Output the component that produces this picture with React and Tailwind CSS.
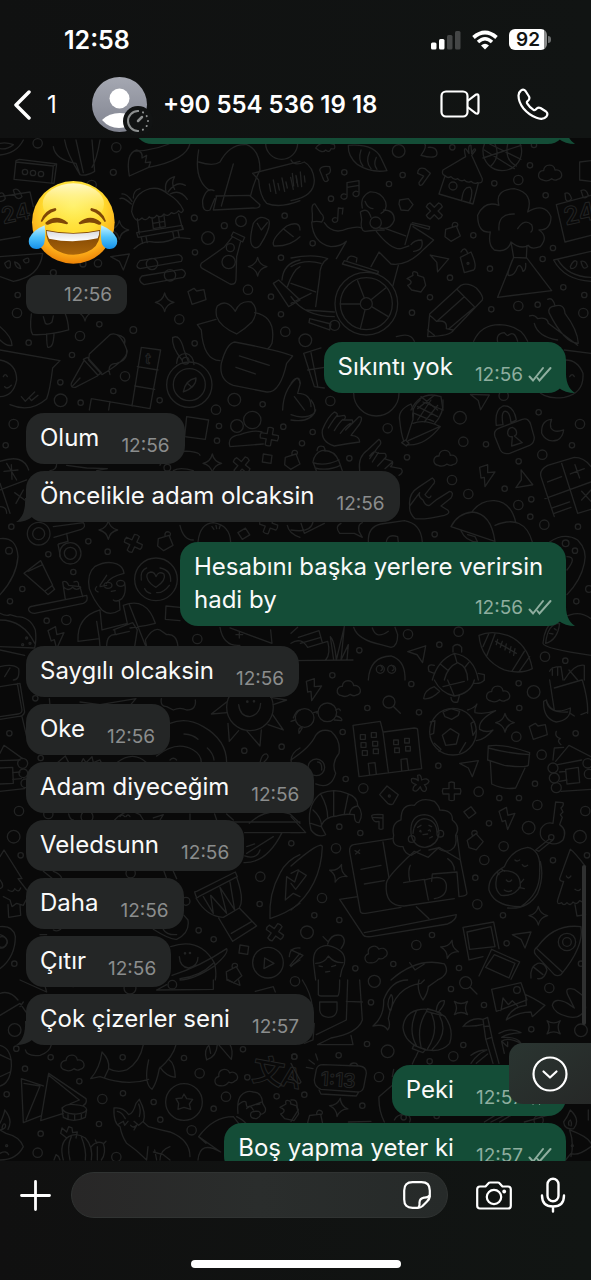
import { useState } from 'react';

const messages = [
  { id: 1, side: 'out', text: 'Sıkıntı yok', time: '12:56', tail: true, first: true },
  { id: 2, side: 'in', text: 'Olum', time: '12:56', first: true },
  { id: 3, side: 'in', text: 'Öncelikle adam olcaksin', time: '12:56', tail: true },
  { id: 4, side: 'out', text: 'Hesabını başka yerlere verirsin hadi by', time: '12:56', tail: true, first: true },
  { id: 5, side: 'in', text: 'Saygılı olcaksin', time: '12:56', first: true },
  { id: 6, side: 'in', text: 'Oke', time: '12:56' },
  { id: 7, side: 'in', text: 'Adam diyeceğim', time: '12:56' },
  { id: 8, side: 'in', text: 'Veledsunn', time: '12:56' },
  { id: 9, side: 'in', text: 'Daha', time: '12:56' },
  { id: 10, side: 'in', text: 'Çıtır', time: '12:56' },
  { id: 11, side: 'in', text: 'Çok çizerler seni', time: '12:57', tail: true },
  { id: 12, side: 'out', text: 'Peki', time: '12:57', first: true },
  { id: 13, side: 'out', text: 'Boş yapma yeter ki', time: '12:57' },
];

// small doodles, drawn around 0,0
const shapes = {
  spark: 'M0-28Q5-5 28 0Q5 5 0 28Q-5 5-28 0Q-5-5 0-28Z',
  plus: 'M-8-26Q0-30 8-26V-8H26Q30 0 26 8H8V26Q0 30-8 26V8H-26Q-30 0-26-8H-8Z',
  cloud: 'M-22 20C-42 18-38-10-20-8C-18-30 12-30 14-10C36-14 42 16 22 18C12 24 8 18 4 16C-6 24-14 24-22 20Z',
  plane: 'M-28-12L28-20L10 28L-2 2Z',
  bolt: 'M-22-24L2-32L2-8L24-10L-6 34L-8 6L-18 8Z',
  square: 'M-12-14L14-10L11 14L-15 10Z',
  bag: 'M-20-8L12-18L24 12L-4 28L-22 14ZM0-14Q-2-32 12-28Q20-24 14-16',
  note: 'M-14 20V-22L22-28V12M-14-8L22-14M-14 20a9 8 0 1 1-4-7M22 12a9 8 0 1 1-4-7',
  puzzle: 'M-28-10L-10-20Q-14-34-2-30Q6-28 4-20L22-14L28 10L14 30L-14 24L-26 10Q-14 6-16-2Q-20-8-28-10Z',
  lens: 'M-8-8m-18 0a18 18 0 1 0 36 0a18 18 0 1 0-36 0M6 6L26 26',
  block: 'M-26-14L-8-24L0-16L22-20L28 10L-14 24Z',
};

// each tile covers 300px of the wallpaper in a 3x grid
const tiles = [
  {
    at: 'translate(0 -8)',
    dots: [[113, 40, 14], [349, 52, 14], [340, 127, 9], [275, 165, 14], [583, 264, 9], [673, 287, 9], [723, 274, 16], [624, 324, 19], [585, 367, 8], [843, 383, 8], [854, 257, 8], [744, 479, 14], [813, 500, 8], [843, 553, 8], [856, 605, 14], [538, 568, 14], [584, 640, 8], [53, 495, 8], [51, 549, 14], [298, 583, 8], [240, 618, 14], [86, 638, 8], [216, 675, 8], [375, 739, 14], [181, 757, 8], [340, 783, 8], [182, 811, 19], [242, 818, 8], [479, 811, 8], [703, 809, 19], [788, 823, 8], [160, 428, 9], [294, 400, 11], [249, 402, 9], [400, 600, 10], [75, 126, 8], [99, 129, 8], [123, 132, 8], [456, 402, 17], [510, 436, 17], [691, 353, 12], [686, 396, 20], [557, 692, 10], [845, 40, 48]],
    items: [['plane', 360, 392], ['spark', 773, 410], ['spark', 494, 517], ['block', 590, 499], ['spark', 255, 545], ['spark', 358, 300]],
    paths: [
      'M48 92L58 88L170 102L162 160L42 148ZM48 96L160 108L170 102M160 108L155 160',
      'M160 50Q166 90 228 100L240 134Q256 140 284 124L276 30M194 30Q200 70 240 134M228 30L250 128M300 30Q290 90 276 112',
      'M0 75Q50 70 70 30M0 40Q20 36 40 44Q20 60 0 56',
      'M388 138Q376 70 410 60Q430 66 426 84L440 76L436 98L452 96L446 112Q560 90 570 40M388 138L446 112M400 64Q480 60 530 30',
      'M395 245Q400 190 450 176Q480 170 504 192Q536 210 550 240Q546 254 536 242Q526 256 514 248Q504 262 492 252Q482 266 470 256Q460 270 448 260Q438 276 426 264Q406 284 395 245Z',
      'M412 266L418 312M536 252L548 298M410 308L546 286L550 298L414 322ZM424 322L428 340M438 320L442 338M518 304L522 324M534 302L538 322M402 356Q430 330 460 336Q500 340 530 322L570 326',
      'M456 262L460 296L496 290L492 256M476 260L480 292M458 280L494 274',
      'M394 222Q370 200 360 206M396 214Q380 190 366 192M400 204Q400 180 420 176M498 184Q490 150 524 140Q512 160 524 178M504 186Q530 150 556 166M510 192Q540 176 562 208',
      'M420 392L536 374Q552 380 544 394L420 416Q402 410 420 392ZM426 438L546 418Q564 428 550 442L432 464Q410 452 426 438Z',
      'M596 60Q580 150 630 182M596 96Q640 110 660 96Q690 40 740 44Q780 60 780 120Q760 160 752 196M700 102L664 228M642 182Q620 170 608 210Q606 250 630 240L644 206M648 198L748 196L780 224Q780 236 760 234L640 240L650 198M600 30Q640 50 664 30',
      'M758 130L900 94M758 130L776 150Q780 200 800 220Q840 236 900 212M808 162L812 184M820 150L828 190M834 160L838 180M846 144L854 184M858 156L862 174M872 142L880 178M888 136L894 170',
      'M694 318L700 306L734 322L728 336ZM698 320L672 352L604 400Q598 410 608 416L690 462Q706 466 708 450L710 380L722 334',
      'M760 350Q744 340 760 280Q780 250 806 270Q816 290 780 346Q770 358 760 350ZM772 280L784 300L802 278',
      'M822 348Q810 330 860 288Q900 270 900 300M822 348Q870 350 900 320M850 296L880 320',
      'M652 528Q680 504 706 544Q720 510 754 516Q780 540 756 576Q736 596 710 612Q660 590 650 560Q646 540 652 528Z',
      'M764 548Q830 560 816 640Q812 650 804 656M648 568L592 584L604 600Q610 690 660 692',
      'M704 636Q680 640 664 700Q656 750 700 766L800 786Q840 790 860 700L878 678Q840 662 704 636ZM718 678L808 706M708 712L766 732',
      'M268 672L330 614Q360 600 382 664Q380 690 306 734L266 690ZM250 688L262 682L304 728L294 736ZM252 692L214 760Q210 774 226 772L292 738M216 770L240 744M350 614Q380 620 374 640M330 734Q320 700 350 700Q384 690 380 660',
      'M424 652L482 660L450 836M424 652L396 828M412 710L474 720M404 768L464 778M274 806L450 836M274 806L268 840M330 814L326 840',
      'M520 622Q540 612 552 660L564 692M518 622Q514 650 546 690M530 700Q530 672 558 670Q580 676 582 704M550 786Q556 750 588 744Q590 770 550 786ZM562 760L576 772',
      'M94 552Q88 600 98 614Q150 616 206 600Q204 570 196 552M140 612Q140 650 144 652Q160 656 162 612M130 560L136 580Q146 586 156 576L160 558',
      'M0 590Q36 620 36 646Q20 650 0 630M0 660L180 692L158 714Q150 780 140 806Q90 850 30 824M64 800L76 814L104 786M88 804L94 812L114 796M0 690Q50 700 50 750Q40 800 0 800M10 740Q16 728 22 740M14 770Q20 780 34 766',
      'M0 330L60 320M0 380L128 370Q120 440 40 454L0 440M14 400Q36 380 30 412Q20 420 14 400ZM44 396Q60 400 62 416Q46 414 44 396ZM70 390Q90 376 86 396Q74 404 70 390',
      'M0 200L90 186L100 230M40 180Q56 170 66 200Q56 212 46 200ZM0 190Q12 184 16 206Q10 216 0 214',
      'M820 460L836 450L900 510M820 460L866 530L900 510M846 450Q850 400 900 390M862 470Q880 420 900 410M848 840Q850 780 888 746Q900 740 900 760',
    ],
    rings: [[568, 764, 68], [568, 764, 48]],
    texts: [[10, 282, 68, '24', -12], [434, 700, 44, 't', 8]],
  },
  {
    at: 'translate(291 -8)',
    dots: [[323, 63, 19], [484, 52, 8], [160, 127, 8], [294, 162, 8], [335, 135, 8], [120, 206, 8], [65, 340, 8], [610, 160, 8], [682, 150, 14], [717, 106, 8], [764, 196, 8], [547, 316, 8], [597, 416, 8], [477, 443, 8], [417, 502, 8], [363, 548, 8], [601, 538, 8], [682, 528, 14], [740, 524, 8], [786, 354, 8], [755, 387, 8], [817, 472, 8], [880, 495, 8], [877, 549, 14], [43, 631, 19], [118, 813, 14], [638, 797, 14], [729, 45, 8], [486, 168, 12], [226, 521, 18], [254, 278, 17], [131, 586, 15], [531, 400, 3]],
    items: [['note', 182, 180], ['cloud', 778, 130], ['plus', 430, 243, 45], ['bag', 484, 306], ['plane', 440, 396, 20], ['puzzle', 376, 456], ['plane', 564, 810, 10]],
    paths: [
      'M172 46Q250 40 270 84L288 122Q240 130 200 104Q170 80 172 46ZM210 60Q200 90 216 108M236 66Q222 96 240 116M256 82Q246 104 258 118',
      'M0 212Q70 200 70 150Q66 110 40 96Q10 110 0 90M4 130L8 168M16 140L18 158M28 126L32 170M40 138L42 156',
      'M86 120Q90 106 116 110Q124 130 106 134L112 150Q104 160 98 150ZM380 130Q380 110 402 116L418 130L394 164Q384 170 384 158L398 138Z',
      'M74 54Q90 30 130 44Q136 60 120 56Q116 70 104 60Q94 72 74 54ZM390 76Q410 50 400 40M390 76Q440 90 438 68Q436 50 412 52',
      'M524 80L456 120Q450 134 464 138Q470 146 480 140Q490 152 500 146Q510 156 520 150Q530 160 540 154Q550 164 560 158Q576 162 574 146L542 76M524 80Q516 50 526 58L534 70Q530 44 540 46L542 70Q550 50 554 60L542 76M462 138L444 192L546 222L562 160M512 212Q516 168 538 172Q548 184 536 218',
      'M596 42L690 88M580 60L670 116M598 110Q630 80 612 42M650 42Q640 90 676 108M690 46L576 84',
      'M326 210L352 206L366 224L352 242L330 240L324 222Z',
      'M142 234L156 236M142 234L140 270a8 7 0 1 1-4-6M156 234L154 252',
      'M64 250Q60 220 72 222L90 250Q104 262 92 276Q76 272 64 276ZM62 276Q66 340 120 350Q150 350 166 334L136 386M100 278Q124 316 170 296Q200 288 212 294',
      'M212 268Q206 300 222 304Q256 300 280 300M212 268L208 246Q230 230 240 262M214 234Q206 200 236 186Q270 184 284 216Q290 240 270 250M222 214Q230 236 246 236M278 240Q310 240 310 270Q300 300 266 294',
      'M256 304Q300 360 330 356L354 348M284 296L344 318M240 410L264 366L300 402Q350 410 400 356L428 330L398 310L366 290M342 344L360 282L414 298L416 290L364 278M360 344Q370 330 392 330Q400 360 368 364M322 406L306 466',
      'M0 384Q70 370 110 386Q86 400 86 440L74 530M0 410Q40 386 90 400M0 460L74 486M0 520L60 490M44 540L130 546M0 500Q40 560 130 560M160 392L262 424L260 432L154 402ZM168 390Q176 370 198 384L196 396',
      'M56 566L120 582L116 600L54 578ZM200 452L220 504M284 474L242 508M148 522L208 522M208 596L222 540M292 560L242 530',
      'M510 366Q522 346 530 370M508 382L540 366Q560 410 548 420L520 428Z',
      'M410 620L416 552L510 466Q530 456 556 474Q580 500 574 510L488 600Q480 618 410 620ZM416 556Q440 576 436 574Q470 568 466 596L486 600M500 480L550 530M520 500L438 574M548 534L474 596M410 600L430 616',
      'M624 226Q610 180 670 176Q730 190 710 246Q760 216 780 260Q780 300 744 300Q774 320 748 350Q720 360 712 346Q690 360 660 336Q650 370 610 360Q590 344 598 306Q560 310 560 256Q580 210 624 226ZM624 300Q620 250 670 252M680 296Q700 264 722 284Q728 300 720 306M660 336L668 382L706 384L708 346M668 382L620 502L782 482L706 382M664 390Q648 430 652 436Q670 440 680 410Q690 400 696 424Q706 420 704 400',
      'M796 224L900 196M796 224L822 336L900 316M822 190Q836 184 842 206Q830 220 824 208ZM870 182Q886 174 892 196Q884 208 876 200ZM866 96L900 92M866 96V150L900 154',
      'M788 390L900 364M788 390Q820 450 900 454M800 388Q830 440 900 442M838 410Q850 384 858 396Q858 416 840 416ZM870 394Q884 390 890 410Q876 424 870 394Z',
      'M716 558Q730 552 740 566Q770 560 772 580L860 646M730 580Q740 620 800 630M770 508Q786 500 792 528Q820 520 822 550Q860 600 862 640Q820 640 774 548Q770 530 792 528',
      'M548 634Q570 584 626 584Q690 586 710 634M620 636Q614 610 640 608Q650 620 652 616Q670 600 680 634M316 620Q360 606 370 634M38 670L90 654M38 670L54 720L70 770L100 774M60 668L80 768M50 720L100 712',
      'M0 760Q20 730 28 760L20 790Q60 790 60 830M10 800L40 840M360 840Q390 780 450 800L456 840M390 800L440 840M430 796L380 836',
      'M820 660L900 670M740 780Q760 810 820 802Q880 790 876 730Q860 690 824 690M836 740Q844 728 850 740',
    ],
    rings: [[226, 521, 94], [226, 521, 78], [634, 64, 58], [256, 790, 68]],
    texts: [[824, 286, 74, '24', -12]],
  },
  {
    at: 'translate(0 262)',
    dots: [[41, 72, 14], [17, 136, 8], [648, 29, 14], [657, 78, 8], [651, 122, 8], [850, 80, 8], [34, 380, 8], [265, 424, 8], [323, 455, 8], [145, 463, 8], [220, 516, 8], [67, 567, 8], [30, 604, 8], [140, 662, 8], [199, 660, 14], [592, 717, 14], [502, 203, 10], [711, 78, 19], [757, 60, 26], [116, 401, 18], [211, 460, 18], [68, 734, 3], [80, 714, 3], [90, 730, 3], [27, 452, 10]],
    items: [['plus', 808, 110, 10], ['spark', 637, 190], ['plus', 725, 196, 40], ['square', 802, 176], ['bag', 876, 180], ['spark', 325, 390], ['plus', 400, 430, 25], ['bag', 495, 424], ['square', 732, 401, -40], ['plus', 806, 374, 20], ['bolt', 170, 712, -10]],
    paths: [
      'M560 50L626 60L616 118L554 110ZM690 140Q680 110 720 104Q760 88 786 96M690 140L790 132',
      'M0 184Q70 160 86 210M0 270L80 240M30 340L0 250M20 190L50 240M12 214L54 210M34 194L36 238M44 278L74 300M70 270L48 310M0 320Q20 320 20 340',
      'M170 192Q170 210 150 212M200 196L260 204L322 206L290 212M480 196Q500 150 570 154Q600 158 600 166M520 212Q540 200 580 212',
      'M160 380L250 368Q260 380 244 388L162 412M174 434Q180 460 180 470M200 400L204 424M176 432L204 424',
      'M72 520L122 482L158 556L134 574ZM84 514L128 494M134 574L144 584L164 568L156 556',
      'M86 630Q84 620 100 618L260 586Q266 604 250 610L104 640Q90 640 86 630ZM196 598L188 546Q200 540 206 556L240 560L248 590M190 560Q204 576 218 562Q230 574 242 562M222 546Q236 540 236 556',
      'M0 416Q50 410 54 470Q50 530 0 584M0 640Q20 650 30 644L50 650Q90 650 106 690Q110 720 104 744L0 740M0 660Q70 660 104 730',
      'M268 566Q260 520 284 500Q320 480 350 492Q370 500 372 520Q330 530 320 550M268 566Q280 600 306 630Q330 650 360 630L358 600M290 560Q280 570 294 576M374 548Q380 580 366 596Q350 608 340 600M320 526L300 556M334 574L346 572M300 560L320 556M312 556a12 9 0 1 0 24 0a12 9 0 1 0-24 0M350 550a12 9 0 1 0 24 0a12 9 0 1 0-24 0',
      'M234 724Q230 650 300 630L306 690L382 670L370 616Q440 590 466 670L440 676M234 724L298 716L290 664M298 716L300 740M340 690L398 668L412 690L404 740M344 690L346 704L388 694M320 740Q320 700 350 704M388 614L436 736M440 676L390 684M440 740L436 720Q460 680 480 690L500 704Q530 700 534 740',
      'M498 618L540 622M498 618L496 658L540 662M424 540Q420 512 440 504M480 504Q514 510 512 544M508 556Q490 580 470 578M434 566Q440 578 452 580M444 540Q434 520 452 516Q464 516 468 530Q476 512 492 522Q500 540 468 562Q450 552 444 540Z',
      'M540 376Q550 420 580 420M594 426Q600 370 640 368Q690 376 692 426M636 380L642 388M648 376L650 386M660 378L658 386M862 376Q866 400 900 412M660 682Q670 740 720 736M690 684L816 730L812 690M708 704H728M718 696V714',
      'M0 750L74 766M0 800Q40 790 56 806Q60 840 40 840M14 830L30 804',
    ],
    rings: [[116, 401, 34], [211, 460, 32], [468, 538, 64]],
    texts: [],
  },
  {
    at: 'translate(291 262)',
    dots: [[507, 53, 19], [290, 85, 14], [65, 96, 8], [33, 130, 8], [175, 175, 8], [348, 172, 8], [517, 125, 14], [585, 133, 8], [743, 37, 8], [867, 72, 14], [843, 136, 8], [754, 164, 14], [683, 184, 8], [483, 240, 14], [532, 282, 14], [641, 266, 8], [721, 298, 8], [682, 315, 14], [718, 350, 8], [760, 374, 14], [861, 380, 8], [431, 403, 8], [894, 567, 10], [856, 604, 8], [351, 703, 14], [503, 695, 14], [445, 734, 8], [205, 751, 8], [762, 770, 14], [823, 782, 8], [124, 826, 8], [268, 808, 12], [302, 808, 12], [824, 430, 10], [852, 452, 8]],
    items: [['cloud', 464, 176, 0], ['bolt', 588, 226], ['plane', 694, 240, 60], ['plane', 380, 762, -10]],
    paths: [
      'M94 90Q110 50 130 36Q144 40 136 50L160 46Q168 54 156 60L184 60Q188 70 176 76L164 90L204 50Q218 50 206 72L180 106Q206 108 206 126Q170 130 130 138Q90 126 94 90ZM112 84Q130 54 140 46M130 92Q146 66 156 58M148 100Q166 76 178 70',
      'M206 212Q200 170 230 150L264 118Q276 128 262 140L236 176M236 168Q250 148 260 160L282 160Q290 170 280 176L304 184Q308 192 298 200L330 206Q340 216 324 226M244 186L262 158M260 198L284 172M282 206L304 186',
      'M356 318Q352 280 382 262L424 234Q438 244 424 256L402 284Q414 300 420 288M386 278Q380 290 396 300Q404 320 416 316L438 298L476 274Q490 276 480 294L450 318L470 330Q480 340 460 346Q400 360 372 356Q354 340 356 318Z',
      'M0 44Q40 60 70 40Q76 20 60 0M0 60Q60 70 74 30',
      'M326 60Q320 30 360 12Q370 30 366 58L346 120M326 60Q330 100 338 122M366 70Q400 56 448 80Q400 140 348 134M352 122L446 80M366 60Q360 20 388 0M370 40L428 64M380 20L440 50M396 6L456 30M456 0Q460 40 430 72M420 0L380 60M440 16L400 66M332 128L344 120L354 130L346 138Z',
      'M66 186Q70 160 92 152Q130 148 144 184L154 212M66 186L76 212M78 152Q80 134 98 140Q104 148 102 154M66 188Q100 200 144 180M72 204Q110 214 148 196',
      'M612 110Q606 90 626 84L694 58Q714 52 720 76L730 112Q730 130 716 136L656 160Q636 164 628 150ZM616 76Q610 30 636 18Q668 14 676 60L660 68Q656 30 640 34Q630 40 636 74ZM650 100Q650 84 664 82Q680 88 676 104L670 108L694 128L662 138L664 110Q652 112 650 100Z',
      'M782 58Q750 60 752 100Q766 130 800 120Q816 110 818 90Q790 100 780 84Q776 70 782 58Z',
      'M750 230Q744 210 770 196L850 172Q880 172 900 200M750 230L790 350M812 190L860 340M762 296L900 246M770 246L812 230M838 222L880 206M852 194L866 234M872 300L900 270M872 274L900 304M860 340L900 328M784 324L836 306M790 340L840 322',
      'M480 380Q500 340 544 336Q600 340 612 424L480 380ZM544 334Q570 300 610 302Q660 306 674 366M612 376Q700 340 724 426M510 392Q524 424 560 426L552 410L530 404',
      'M232 426Q230 380 270 372L340 362Q390 370 394 426M286 426Q290 400 320 410L322 426',
      'M150 370Q130 380 146 400L190 400L214 412L204 394Q200 372 214 368M0 390Q60 400 66 366M30 370L40 400L100 370',
      'M776 426Q820 396 860 420Q890 450 880 490Q870 540 828 584M828 470Q860 470 828 510',
      'M188 682Q200 720 270 734L300 742Q320 740 320 704L312 682M244 684Q256 720 292 694',
      'M20 682L0 700M22 712L84 692L94 728M28 730L90 712M0 782L186 780M0 730Q30 710 50 742L110 724Q120 760 104 780M128 780L118 710Q130 720 136 780L160 680L150 780L172 734L168 780',
      'M564 706Q600 690 650 706Q710 730 724 806Q690 824 640 810Q570 780 564 706ZM594 700L576 740M612 702L588 766M700 754L664 812M716 770L684 816M614 724L676 760M620 718L616 734M634 724L628 742M646 732L642 750M660 740L656 758M672 746L668 766',
      'M424 840Q440 780 490 760Q550 770 562 840M486 756V740Q500 726 512 742V756M430 796Q406 790 414 814L430 820M460 840Q470 800 500 788Q530 800 530 840M490 760L498 788M536 784L520 804M448 792L472 812M562 820L580 824V840',
      'M232 840Q236 770 300 768Q340 780 342 830V840M268 796Q280 806 270 812M302 796Q316 806 304 812',
      'M756 730Q760 680 790 660L840 644Q870 634 900 656M756 730Q760 746 900 766M764 730Q800 720 806 670Q770 670 764 730M776 700L786 702M790 686L796 690M776 814Q780 800 810 800L816 840M784 804V826M800 802V826M820 840Q850 790 880 796V840M834 810L860 840',
    ],
    rings: [],
    texts: [],
  },
  {
    at: 'translate(0 542)',
    dots: [[28, 160, 8], [122, 234, 8], [57, 393, 14], [41, 470, 19], [62, 526, 8], [733, 212, 8], [845, 200, 8], [874, 490, 8], [781, 590, 14], [779, 672, 8], [596, 751, 8], [641, 778, 8], [43, 851, 8], [558, 664, 12], [106, 55, 8], [742, 65, 2], [762, 64, 2], [555, 820, 2], [570, 819, 2], [68, 250, 15], [70, 280, 13], [76, 310, 13], [261, 410, 18], [392, 580, 14], [145, 402, 14], [6, 786, 16]],
    items: [['plus', 825, 757, 35], ['square', 732, 809], ['bag', 700, 880, -10]],
    paths: [
      'M0 20L60 10L74 96Q70 110 52 110L0 118M52 10L66 90Q66 100 54 102L0 110M66 110L80 170M148 56L150 76M240 66L300 74L408 56L390 76M484 56Q480 80 500 80L520 90Q540 80 560 90Q590 90 586 60',
      'M682 98L634 102L680 66M684 130L688 184L716 152M740 152L780 198L784 150M804 134L850 150L818 104M820 74L860 60L812 52M716 74Q720 110 750 110Q780 104 782 70',
      'M510 130Q560 110 610 140Q680 180 680 248M470 228Q530 180 580 210Q604 224 604 248M552 162Q580 164 594 178M622 204Q640 220 642 240M510 240Q520 230 530 240',
      'M0 220L12 196L68 236M0 242L60 240M0 264L38 262L40 310L0 312M0 334L74 326M38 278L60 276M38 298L64 296',
      'M172 248L196 228L206 248M244 248L250 236L258 248L276 230L280 248L300 240L304 248M350 248Q400 210 440 248M780 248Q786 220 800 222Q812 230 790 248M874 248Q870 220 900 204',
      'M206 402Q210 420 220 420M344 420Q380 380 420 404L430 420M360 410Q366 400 374 410M378 410Q384 400 390 410M460 414L490 404L480 420M570 402V420M644 402L650 420M680 402L700 420',
      'M692 426H900M734 458H900M748 430Q800 380 870 402L900 430M732 548Q800 550 846 458M740 500L764 492M740 520L820 470M780 510Q770 540 734 528',
      'M12 510L0 530M12 510L66 596L54 596L80 630M0 600Q16 620 0 626M24 630Q40 640 44 626Q56 640 62 624M10 650L30 660L36 680L50 670L70 676L78 660M24 674L26 712L62 706L60 676',
      'M584 636Q590 660 596 650L712 590L706 576L590 634ZM588 654Q620 710 670 712L718 684Q734 660 710 592M610 650L640 700L632 646L680 700L660 622L704 690L690 606M656 714L698 784L770 738L718 684M694 760L756 724',
      'M810 716Q806 640 840 580Q860 540 900 524M810 716Q860 700 900 670M856 660L860 590L884 606L896 570M856 660L880 640L900 650',
      'M0 740Q40 736 46 770Q46 830 0 866M0 764Q20 770 22 786Q14 808 0 804M460 748Q510 780 530 778Q570 760 564 720L552 706M490 748Q500 766 530 764M130 574L160 598M160 574Q180 580 186 596M492 574L500 596M520 574L530 596M120 764L140 764M160 750Q172 756 182 748',
      'M512 800Q600 770 644 850Q650 880 646 900M538 830Q540 862 566 864Q594 858 594 832M516 886Q600 860 680 806Q688 820 640 860Q580 900 540 900M540 896Q600 890 640 850',
      'M794 834L822 850L792 866ZM868 830Q870 800 900 804M870 856L900 820M900 840L872 858M880 114Q890 90 900 90',
    ],
    rings: [[750, 82, 70], [804, 848, 46]],
    texts: [],
  },
  {
    at: 'translate(291 542)',
    dots: [[361, 12, 8], [683, 10, 8], [229, 84, 8], [384, 97, 8], [728, 36, 19], [685, 84, 8], [155, 156, 8], [676, 170, 14], [854, 160, 8], [752, 224, 14], [164, 297, 8], [217, 325, 14], [442, 257, 8], [732, 311, 8], [563, 335, 14], [625, 354, 8], [684, 354, 8], [739, 375, 14], [883, 393, 14], [594, 430, 8], [145, 440, 8], [208, 459, 8], [713, 443, 19], [867, 470, 19], [135, 505, 14], [638, 499, 14], [580, 540, 14], [786, 541, 8], [553, 593, 8], [93, 654, 14], [559, 673, 14], [70, 706, 8], [145, 720, 8], [636, 706, 8], [48, 757, 19], [423, 765, 8], [376, 795, 14], [647, 790, 8], [307, 852, 8], [193, 865, 8], [504, 864, 8], [870, 851, 8], [888, 526, 8], [76, 262, 25], [109, 97, 28], [41, 114, 28], [781, 472, 8], [786, 264, 15], [790, 294, 15], [796, 323, 15], [890, 250, 14], [894, 282, 14], [828, 786, 13], [295, 348, 3], [362, 477, 10], [448, 461, 10]],
    items: [['bolt', 68, 28], ['cloud', 174, 27], ['cloud', 622, 43], ['lens', 302, 74], ['spark', 642, 128], ['block', 741, 154], ['plane', 534, 262], ['plus', 482, 334, 0], ['square', 537, 397, -45], ['bolt', 650, 414, -10], ['bag', 550, 482, -20], ['spark', 142, 580, 20], ['spark', 742, 707], ['plane', 692, 776], ['spark', 476, 808, 15], ['cloud', 254, 822, -20]],
    paths: [
      'M186 136L268 124L276 156L292 276M186 136L204 290L392 266L380 150Q380 144 370 144L278 156M208 164h15v14h-15ZM241 158h15v14h-15ZM210 188h15v14h-15ZM245 184h15v14h-15ZM214 212h15v14h-15ZM247 207h15v14h-15ZM308 180h14v14h-14ZM341 175h14v14h-14ZM311 204h14v14h-14ZM344 199h14v14h-14ZM236 286L232 250L252 248L256 282M332 272L330 238L348 236L352 268',
      'M456 96L480 86L506 94L502 106L482 118L462 110ZM478 146L504 162L496 192L464 196L454 166ZM418 126L432 122L428 160L418 164M550 124L540 130L546 166L556 150M430 190L450 208L444 214M524 188L506 218M530 90Q550 84 558 72Q550 86 552 98Q580 104 614 92Q560 120 566 148Q586 160 606 150Q580 180 556 182',
      'M592 198Q640 190 716 218L712 256Q700 264 640 256L590 240ZM592 204Q650 220 716 224M598 244L602 312Q640 330 674 324L702 264',
      'M78 100L80 94L68 98M134 90Q146 82 148 92M136 108Q156 114 152 122L130 120M24 160Q20 140 34 144L24 160M12 120L0 124',
      'M0 240Q60 200 74 166Q90 144 120 154Q150 180 144 220Q120 250 134 280Q120 330 74 312M80 246Q94 246 92 270',
      'M56 430Q50 370 90 340Q130 324 168 340Q200 350 200 376Q220 400 204 428Q190 430 190 404Q160 400 138 408Q100 410 90 438L104 464Q80 476 60 450ZM66 390Q90 410 92 438M90 344Q110 380 110 412M128 332V408M172 342L160 400M200 378Q180 380 176 400M60 430L90 440',
      'M380 286Q390 280 392 300Q410 292 414 304Q410 314 400 314Q412 328 402 334Q392 336 388 320Q376 340 366 330Q366 318 376 314Q356 308 362 296Q374 294 382 302Z',
      'M266 344L288 318L322 344L306 372Q300 376 290 370ZM242 408Q242 402 276 404V446Q270 450 264 446V424Q246 430 242 408ZM244 412L274 414',
      'M336 500Q300 500 308 466Q300 430 330 420Q330 370 370 376Q390 350 430 364Q446 380 446 390Q486 390 484 420Q510 440 494 466Q500 500 480 510Q460 520 440 504L414 510M336 500Q340 520 360 526L388 510',
      'M360 460Q356 406 400 404Q440 406 444 460Q440 496 402 502Q366 500 360 460M366 460Q370 420 400 416Q436 420 438 456M380 442L390 436M414 436L422 440M386 454Q390 448 390 456M412 452Q418 446 418 454M396 464L410 462M416 474L424 470',
      'M286 610Q288 590 370 514L412 532L444 502L508 540L528 640Q528 648 504 650L498 576L424 582L422 604M286 610Q280 680 340 678L490 656M338 608L400 598L412 660M356 602Q350 570 358 556M470 536Q490 550 490 570M402 600Q460 580 466 614Q470 650 430 656M498 466L508 540',
      'M304 476L188 494Q174 496 176 516L208 694Q210 702 224 700L330 682M276 486L294 594M192 512L206 520M206 510L194 522M210 568L270 556M220 612L280 602M200 650L146 658L216 764Q220 772 240 770L470 732Q496 720 496 704L220 758M376 680L414 716',
      'M594 630Q590 590 640 560Q660 510 710 502Q750 510 746 570Q750 640 690 680Q610 680 594 630ZM748 544Q760 590 740 640Q710 690 650 684M616 600Q616 580 636 572Q690 570 688 620Q670 650 630 646Q610 630 616 600M624 584L618 576M640 574L632 568M688 610L698 598M684 622L700 626M672 540Q678 546 686 540M694 554Q700 564 710 556M646 600Q654 610 662 600M640 630Q650 638 662 632',
      'M778 490Q740 480 750 446Q764 424 786 430L794 366L816 368Q820 376 810 384L816 396L808 404L814 412L806 434Q830 450 816 480Q800 496 778 490M774 478L734 510L744 514L786 480',
      'M794 244L834 196L900 230M786 240L790 204L818 202M796 154Q790 170 808 176Q796 182 810 194M800 254L872 240M806 276L824 274M824 268L862 262L866 308L828 312ZM806 304L828 300M810 334L900 328M766 60Q780 110 838 84Q840 120 796 126Q756 116 758 64ZM766 60Q770 100 830 96M776 0L790 90M790 24L872 0M890 100Q892 60 874 0M870 104L890 96M850 108L838 100',
      'M430 0Q450 40 490 48Q540 40 550 0M398 56Q400 30 430 20L446 34Q420 60 398 56ZM480 52Q480 70 500 66L506 44M470 0L490 48M456 20L520 4M550 10Q570 12 580 0',
      'M838 508L806 596Q806 604 818 604L800 660Q796 676 812 668Q818 680 828 668Q838 680 846 666Q858 676 866 662L882 670M838 508Q850 516 884 560M826 588Q832 600 840 588M852 628Q862 636 868 628M852 674L858 708L884 704',
      'M516 742L608 726L624 806M516 742L534 840L576 830M528 756L600 740L612 800L536 808ZM602 808L686 846L660 898M602 808L564 888M610 824L672 850L654 894L584 862Z',
      'M734 824Q724 810 740 800Q790 730 870 740Q880 800 810 884Q800 890 790 884L734 824ZM738 806L814 876M720 894Q716 860 740 850Q760 846 768 870Q760 900 740 896M726 860L756 884',
      'M68 852Q62 800 110 796Q170 810 160 852Q150 870 148 890M68 852Q70 870 74 900M74 850Q100 850 112 828Q130 850 156 848M110 792Q120 760 150 766Q170 780 150 806M96 770L112 786M84 858L94 860M122 860L134 856M104 876L116 874',
      'M300 900Q380 830 460 852Q480 880 440 900M356 848L372 870L400 852M0 580L20 570L46 586L14 628L0 610M0 558Q90 480 94 500Q90 620 0 690M0 810L36 826L0 860M0 410L44 458H0',
    ],
    rings: [[486, 155, 70], [828, 786, 26]],
    texts: [],
  },
  {
    at: 'translate(0 842)',
    dots: [[44, 150, 19], [49, 206, 8], [152, 232, 8], [75, 266, 8], [368, 232, 8], [552, 234, 8], [729, 208, 8], [883, 230, 8], [599, 280, 14], [742, 292, 8], [238, 304, 8], [307, 357, 14], [369, 340, 8], [20, 343, 8], [461, 366, 8], [678, 350, 14], [641, 386, 8], [830, 349, 8], [297, 432, 8], [122, 461, 8], [481, 419, 8], [575, 451, 14], [113, 518, 14], [349, 531, 14], [517, 14, 13], [390, 24, 18], [20, 497, 3]],
    items: [['cloud', 218, 250, 0], ['cloud', 678, 292, -15], ['puzzle', 868, 392]],
    paths: [
      'M60 0L140 36L130 0M0 106L60 70L78 96M0 40Q30 30 54 60M70 66L60 80M150 10L220 20V0M470 30L500 14M470 30L640 28L640 0M680 0L720 16L716 0M766 34L820 20L826 36',
      'M76 210Q80 230 120 226Q150 216 154 194M0 196Q36 206 34 260Q30 310 0 318M0 224L34 240M0 290L30 276',
      'M272 296Q300 264 306 216Q330 240 326 266Q350 280 380 270Q420 246 430 194M272 296L300 290Q380 320 446 298M446 240Q430 310 456 328Q470 310 478 266Q520 230 528 194M480 262Q500 290 526 292Q524 250 508 240M326 266L314 292M620 240Q610 210 628 194M620 240Q650 230 652 194M656 194L694 238Q700 210 690 194M628 200L632 220',
      'M64 296L130 318M64 296L70 428L122 408M72 310L120 318L78 420M146 280L258 356Q262 370 250 376M146 280L122 422L190 400M146 286L238 360L210 372M186 384Q200 370 224 374Q260 376 260 390Q250 404 220 402Q190 400 186 384ZM186 384L190 412Q220 430 256 412L260 390M204 404V418M224 406V420M244 402V414',
      'M0 430Q14 400 14 390Q40 420 24 448M6 444Q10 426 16 434Q20 446 0 450M0 450L18 460Q60 470 70 500Q50 540 0 540M0 520Q20 510 26 524',
      'M162 540L168 524L176 530L180 540M182 460L186 444L200 456L206 440L216 444L218 458L232 456L228 474M182 460L200 474M190 540Q176 490 206 470Q230 456 256 474Q280 500 274 540M210 540Q200 500 214 470M244 470Q260 510 256 540M274 500Q290 480 310 490Q320 520 304 540M292 540V500M318 484L310 492M286 480L290 490',
      'M342 384Q370 380 386 404Q400 400 408 370L418 358Q440 400 430 426L446 440Q480 450 510 456Q570 480 570 530M342 384Q340 430 360 440Q366 470 380 490Q410 510 440 540M352 394Q366 396 376 416M416 372Q424 390 418 410M356 432L370 424L374 436L384 424M402 424L416 436L430 424M392 436Q400 446 410 436L402 450M440 540L444 500M510 500Q480 510 480 540M460 516L490 524L510 540M470 540L464 510',
      'M552 342L560 356L578 358L568 372L572 388L552 382L534 388L536 370L528 356L546 354Z',
      'M596 470Q640 410 700 410L716 430M596 470L662 516Q600 480 594 540M596 470L618 490M714 400Q710 360 724 346Q740 330 760 336Q786 336 788 370L796 384Q800 400 780 404M714 376Q730 360 738 366Q740 390 748 380L786 366M740 386Q750 370 760 390M752 404Q750 392 776 394Q790 404 770 416Q750 416 752 404M710 410Q730 420 738 430M770 374L780 372',
    ],
    rings: [[552, 366, 55]],
    texts: [[752, 300, 96, '文', 10], [838, 316, 84, 'A', 12]],
  },
  {
    at: 'translate(291 842)',
    dots: [[480, 27, 8], [240, 67, 8], [775, 24, 14], [579, 75, 8], [721, 148, 8], [870, 151, 19], [228, 192, 8], [290, 214, 19], [517, 195, 8], [487, 229, 14], [416, 244, 8], [143, 226, 8], [10, 230, 8], [264, 291, 14], [40, 344, 8], [214, 377, 8], [437, 408, 8], [743, 421, 14], [678, 30, 10], [250, 4, 18], [12, 4, 14], [338, 412, 8], [844, 497, 3]],
    items: [['spark', 510, 84, 45], ['spark', 788, 142, 45], ['lens', 532, 16], ['spark', 143, 382, 10], ['bag', 74, 418, 10]],
    paths: [
      'M82 0V44Q84 48 90 48H140Q146 46 146 0M34 0Q60 40 64 80M86 66H138V90Q136 112 112 112Q88 110 86 90ZM170 0L166 120L76 164M206 0L214 120Q200 160 120 174L80 194H186L180 166M166 64L214 66M70 130L66 180L40 190',
      'M246 138Q280 110 278 60Q300 0 350 0M246 138Q280 130 290 150Q300 140 292 116Q310 20 390 10L400 0M300 90Q310 50 300 44Q284 70 296 90M384 0Q376 30 396 60Q410 40 412 20L440 0',
      'M336 142Q340 100 380 90Q420 80 462 110Q490 150 476 190Q450 220 400 208Q340 190 336 142ZM410 86L448 98L452 106L406 94ZM436 90Q440 60 460 62Q462 74 444 94M368 196L404 208L396 218L364 206ZM376 94Q350 150 376 196M406 96Q376 140 390 200M420 98Q446 150 410 206M446 108Q474 160 424 208M382 214L374 232M372 234L364 252',
      'M602 28L690 8L708 60L616 94ZM630 92L636 54L652 74L664 62L680 78M646 120Q660 80 706 76L704 44Q720 50 762 76L724 110L720 96Q680 96 646 120ZM784 76Q790 50 830 70L850 84L830 44Q820 20 850 28L880 50L884 84Q870 120 830 110Q790 100 784 76Z',
      'M516 140Q540 110 576 118L590 112L606 186L624 250M576 118L584 176L606 250M578 140L594 138M584 178L602 172M520 138Q550 140 574 134M624 160Q660 140 690 158Q650 160 632 172Q680 170 690 190Q650 170 632 184M632 184L650 200V186M540 250Q560 220 588 210Q560 210 540 226M556 250L590 222M632 184L640 220',
      'M76 268Q80 254 96 254L206 258Q226 260 226 280L218 322Q214 336 200 336L90 328Q70 320 70 300ZM84 330L90 342L196 348L202 338M176 258Q180 246 196 250L202 258M46 262L66 266M54 240L70 252M74 222L80 240',
      'M0 250L30 306Q26 314 18 308L0 290M304 290L308 268M264 350L304 316M264 350Q262 390 280 426M310 420Q320 400 350 404Q362 412 356 426M0 360Q20 356 18 380L22 390L0 424M172 426L240 424M580 426L612 406M600 426L640 406M626 426L660 406M700 426L770 406',
      'M838 390Q870 420 848 446Q820 450 818 426Q830 410 838 390ZM834 436Q830 424 838 420Q844 430 840 438M836 450Q890 470 900 490M836 450Q850 490 840 530M824 540L840 520Q860 530 900 500M892 390V420',
    ],
    rings: [],
    texts: [[88, 316, 58, '1:13', 4]],
  },
];

function Wallpaper() {
  return (
    <svg
      viewBox="0 0 591 1023"
      preserveAspectRatio="xMidYMin slice"
      aria-hidden="true"
      className="absolute inset-0 h-full w-full"
    >
      <g fill="none" stroke="#222323" strokeWidth="4" strokeLinecap="round" strokeLinejoin="round">
        {tiles.map((tile) => (
          <g key={tile.at} transform={`${tile.at} scale(.3333)`}>
            {tile.dots.map(([x, y, r]) => (
              <circle key={`${x}-${y}`} cx={x} cy={y} r={r} />
            ))}
            {tile.rings.map(([x, y, r]) => (
              <circle key={`${x}-${y}-${r}`} cx={x} cy={y} r={r} />
            ))}
            {tile.items.map(([kind, x, y, turn = 0]) => (
              <path key={`${x}-${y}`} d={shapes[kind]} transform={`translate(${x} ${y}) rotate(${turn})`} />
            ))}
            {tile.paths.map((d) => (
              <path key={d} d={d} />
            ))}
            {tile.texts.map(([x, y, size, label, turn]) => (
              <text
                key={label}
                transform={`translate(${x} ${y}) rotate(${turn})`}
                fontSize={size}
                fontWeight="600"
                strokeWidth="3"
              >
                {label}
              </text>
            ))}
          </g>
        ))}
      </g>
    </svg>
  );
}

function JoyEmoji() {
  return (
    <svg viewBox="84 150 270 255" role="img" aria-label="😂" className="ml-[2px] mt-9 h-[85px] w-[90px]">
      <defs>
        <radialGradient id="face" cx="50%" cy="30%" r="72%">
          <stop offset="0" stopColor="#fff05a" />
          <stop offset=".5" stopColor="#ffdb2e" />
          <stop offset=".8" stopColor="#fdae1a" />
          <stop offset="1" stopColor="#e97c04" />
        </radialGradient>
        <linearGradient id="shine" x1="0" y1="0" x2="0" y2="1">
          <stop offset="0" stopColor="#fffde0" stopOpacity=".85" />
          <stop offset="1" stopColor="#ffee52" stopOpacity="0" />
        </linearGradient>
        <linearGradient id="mouth" x1="0" y1="0" x2="0" y2="1">
          <stop offset="0" stopColor="#7a4103" />
          <stop offset="1" stopColor="#a9650a" />
        </linearGradient>
        <linearGradient id="teeth" x1="0" y1="0" x2="0" y2="1">
          <stop offset="0" stopColor="#d9dade" />
          <stop offset="1" stopColor="#ffffff" />
        </linearGradient>
        <linearGradient id="tear" x1="0" y1="0" x2="0" y2="1">
          <stop offset="0" stopColor="#c9f3ff" />
          <stop offset=".5" stopColor="#4fc3fb" />
          <stop offset="1" stopColor="#1590ea" />
        </linearGradient>
      </defs>
      <circle cx="220" cy="277" r="124" fill="url(#face)" />
      <ellipse cx="220" cy="222" rx="92" ry="62" fill="url(#shine)" />
      <path d="M122 274Q132 240 166 234Q172 238 166 243Q142 250 126 276Z" fill="#7f4707" />
      <path d="M318 274Q308 240 274 234Q268 238 274 243Q298 250 314 276Z" fill="#7f4707" />
      <path d="M136 278Q168 248 204 278Q204 284 196 282Q168 272 144 284Q136 286 136 278Z" fill="#7f4707" />
      <path d="M304 278Q272 248 236 278Q236 284 244 282Q272 272 296 284Q304 286 304 278Z" fill="#7f4707" />
      <path d="M138 300Q220 318 300 300Q302 340 276 358Q250 374 220 374Q188 374 162 356Q138 338 138 300Z" fill="url(#mouth)" />
      <path d="M140 303Q220 320 298 303Q298 318 293 325Q220 342 147 326Q141 318 140 303Z" fill="url(#teeth)" />
      <path d="M134 286Q100 300 88 324Q82 344 98 355Q122 362 132 342Q138 318 134 286Z" fill="url(#tear)" />
      <path d="M304 286Q338 300 350 324Q356 344 340 355Q316 362 306 342Q300 318 304 286Z" fill="url(#tear)" />
    </svg>
  );
}

function Ticks() {
  return (
    <svg viewBox="0 0 24 17" fill="none" stroke="currentColor" strokeWidth="2" strokeLinecap="round" aria-label="delivered" className="h-[17px] w-6">
      <path d="M1.500 10.500L5 14.500L15 2M9.500 12L11.500 14.500L22.500 2" />
    </svg>
  );
}

function Bubble({ message }) {
  const { side, text, time, tail, first } = message;
  const out = side === 'out';

  return (
    <li className={`flex ${out ? 'justify-end' : 'justify-start'} ${first ? 'mt-5' : 'mt-[7px]'}`}>
      <div
        className={`relative flow-root max-w-[386px] rounded-[18px] pb-[7px] pl-[14px] pt-2 ${
          out ? 'bg-[#144d37] pr-[14px] text-[#8fae9f]' : 'bg-[#242626] pr-[15px] text-[#8b8d8d]'
        }`}
      >
        <span className="text-[24px] leading-[33px] text-[#fafafa]">{text}</span>
        <span className="float-right ml-[22px] mt-[13px] flex h-[23px] items-center gap-[5px] text-[19px] leading-[23px]">
          <time>{time}</time>
          {out && <Ticks />}
        </span>
        {tail && (
          <svg
            viewBox="0 0 16 24"
            aria-hidden="true"
            className={`absolute bottom-0 h-6 w-4 ${out ? '-right-[9px]' : '-left-[10px] -scale-x-100'}`}
          >
            <path d="M0 0H7Q6 18 16 24Q6 24 0 19Z" fill={out ? '#144d37' : '#242626'} />
          </svg>
        )}
      </div>
    </li>
  );
}

function StatusBar() {
  return (
    <div className="flex h-[77px] items-center justify-between pl-16 pr-10 pt-[2px]">
      <time className="text-[25px] font-semibold leading-8 text-white">12:58</time>
      <div className="flex items-center gap-[11px]">
        <svg viewBox="0 0 30 20" className="h-5 w-[30px]" aria-label="signal">
          <rect x="0" y="12.500" width="5.500" height="7" rx="1.500" fill="#fff" />
          <rect x="8" y="9" width="5.500" height="10.500" rx="1.500" fill="#fff" />
          <rect x="16" y="5" width="5.500" height="14.500" rx="1.500" fill="#444646" />
          <rect x="24" y="1" width="5.500" height="18.500" rx="1.500" fill="#444646" />
        </svg>
        <svg viewBox="0 0 26 20" className="h-5 w-[26px]" fill="none" stroke="#fff" aria-label="wifi">
          <path d="M1.500 7.500Q13-2.500 24.500 7.500" strokeWidth="3.800" />
          <path d="M6 12Q13 5.500 20 12" strokeWidth="3.500" />
          <path d="M9 15.500Q13 12 17 15.500L13 19.500Z" fill="#fff" stroke="none" />
        </svg>
        <div className="flex items-center gap-[1px]">
          <span className="flex h-[21px] w-[38px] items-center justify-center rounded-[6px] bg-[linear-gradient(90deg,#fff_92%,#8b8c8c_92%)] text-[19px] font-semibold leading-5 text-[#111413]">
            92
          </span>
          <span className="h-[7px] w-[3px] rounded-r-full bg-[#6c6e6e]" />
        </div>
      </div>
    </div>
  );
}

function Header() {
  return (
    <header className="bg-linear-to-r from-[#101111] to-[#111413]">
      <StatusBar />
      <div className="flex h-[61px] items-start pl-[13px] pr-[42px] text-white">
        <button type="button" aria-label="Back" className="flex h-[55px] w-[79px] items-center gap-4">
          <svg viewBox="0 0 18 30" className="h-[30px] w-[18px]" fill="none" stroke="currentColor" strokeWidth="3.500" strokeLinecap="round" strokeLinejoin="round">
            <path d="M16 2L3 15L16 28" />
          </svg>
          <span className="text-[24px] leading-8">1</span>
        </button>
        <a href="#contact" className="flex h-[55px] items-center gap-[15px]">
          <svg viewBox="0 0 56 55" className="h-[55px] w-14 overflow-visible">
            <defs>
              <linearGradient id="avatar" x1="0" y1="0" x2="0" y2="1">
                <stop offset="0" stopColor="#a5a8b2" />
                <stop offset="1" stopColor="#80838f" />
              </linearGradient>
            </defs>
            <circle cx="27.500" cy="27.500" r="27.500" fill="url(#avatar)" />
            <circle cx="27.500" cy="21.500" r="10" fill="#fff" />
            <path d="M10 43Q17 36 28 36Q39 36 45 43Q37 51 27 51Q17 51 10 43Z" fill="#fff" />
            <circle cx="46" cy="44" r="15" fill="#111313" />
            <g fill="none" stroke="#8d9090" strokeWidth="2" strokeLinecap="round">
              <path d="M46 34A10 10 0 1 0 46 54" />
              <path d="M46 34A10 10 0 0 1 46 54" strokeDasharray=".1 5.100" />
              <path d="M46 44L50 40" strokeWidth="2.500" />
            </g>
          </svg>
          <h1 className="whitespace-nowrap text-[24px] font-semibold leading-8">+90 554 536 19 18</h1>
        </a>
        <div className="ml-auto flex h-[54px] items-center gap-[37px]">
          <button type="button" aria-label="Video call">
            <svg viewBox="0 0 40 28" className="h-7 w-10" fill="none" stroke="currentColor" strokeWidth="2.200" strokeLinejoin="round">
              <rect x="1.500" y="1.500" width="26" height="25" rx="4.500" />
              <path d="M27.500 11L35.500 4.800Q38.500 3.500 38.500 6.500V21.500Q38.500 24.500 35.500 23.200L27.500 17" />
            </svg>
          </button>
          <button type="button" aria-label="Call">
            <svg viewBox="0 0 32 32" className="size-8" fill="none" stroke="currentColor" strokeWidth="2.200" strokeLinejoin="round">
              <path d="M4 2.500Q6.500 0.500 8.500 3L12 8.500Q13 10.500 11.500 12.200L10.200 13.500Q9.500 14.500 10.300 15.600Q12.500 19.200 16.500 21.900Q17.600 22.600 18.500 21.800L20 20.300Q21.500 19 23.500 20L29 23.500Q31.500 25.500 29.500 28.500Q26 32.500 19.500 29.800Q12 27 6.500 20.500Q1.500 14 1.500 7.500Q1.800 4 4 2.500Z" />
            </svg>
          </button>
        </div>
      </div>
    </header>
  );
}

function Composer() {
  const [draft, setDraft] = useState('');

  return (
    <footer className="bg-linear-to-r from-[#101010] to-[#111513] pb-3 pt-[11px] text-white">
      <form className="flex h-[46px] items-center pl-[19px] pr-[25px]" onSubmit={(e) => e.preventDefault()}>
        <button type="button" aria-label="Attach" className="mr-[19px] shrink-0">
          <svg viewBox="0 0 33 33" className="size-[33px]" stroke="currentColor" strokeWidth="2.800" strokeLinecap="round">
            <path d="M16.500 2.500V30.500M2.500 16.500H30.500" />
          </svg>
        </button>
        <div className="flex h-[46px] min-w-0 flex-1 items-center rounded-full border border-[#303332] bg-linear-to-r from-[#282727] via-[#2a2d2c] to-[#262a29] pl-5 pr-4">
          <input
            type="text"
            aria-label="Message"
            value={draft}
            onChange={(e) => setDraft(e.target.value)}
            className="w-full min-w-0 flex-1 bg-transparent text-[24px] outline-none"
          />
          <button type="button" aria-label="Stickers" className="shrink-0">
            <svg viewBox="0 0 28 28" className="size-7" fill="none" stroke="currentColor" strokeWidth="2.200" strokeLinejoin="round">
              <path d="M9.500 1.200H18.500Q26.800 1.200 26.800 9.500V15.500Q26.500 18 24 20.500L19.500 25Q17.500 26.800 15 26.800H9.500Q1.200 26.800 1.200 18.500V9.500Q1.200 1.200 9.500 1.200Z" />
              <path d="M15.500 26.500Q17 24.500 16.500 21.500Q16.800 17.200 21 16.600Q25 16.800 26.600 14.500" />
            </svg>
          </button>
        </div>
        <button type="button" aria-label="Camera" className="ml-7 shrink-0">
          <svg viewBox="0 0 36 29" className="h-[29px] w-9" fill="none" stroke="currentColor" strokeWidth="2.200" strokeLinejoin="round">
            <path d="M4 5.500H9.500L12.500 2.200Q13 1.500 14.200 1.500H21.800Q23 1.500 23.500 2.200L26.500 5.500H32Q34.800 5.500 34.800 8.300V24.700Q34.800 27.500 32 27.500H4Q1.200 27.500 1.200 24.700V8.300Q1.200 5.500 4 5.500Z" />
            <circle cx="18" cy="16" r="7.200" />
            <circle cx="28.200" cy="10.500" r="1.900" fill="currentColor" stroke="none" />
          </svg>
        </button>
        <button type="button" aria-label="Voice message" className="ml-7 shrink-0">
          <svg viewBox="0 0 26 36" className="h-9 w-[26px]" fill="none" stroke="currentColor" strokeWidth="2.400" strokeLinecap="round">
            <rect x="7.500" y="1.700" width="11" height="22.500" rx="5.500" />
            <path d="M2 18.500Q2 29.500 13 29.500Q24 29.500 24 18.500M13 29.500V34.500" />
          </svg>
        </button>
      </form>
      <div className="mx-auto mt-[42px] h-2 w-[210px] rounded-full bg-white" />
    </footer>
  );
}

export default function App() {
  return (
    <div className="flex h-screen flex-col overflow-hidden bg-[#090909] font-['Inter','Noto_Sans_CJK_SC',sans-serif]">
      <Header />
      <main className="relative min-h-0 flex-1 overflow-hidden">
        <Wallpaper />

        <div className="relative pl-[26px] pr-[25px]">
          {/* end of the message that has scrolled under the header */}
          <div className="relative -mt-[45px] ml-auto h-[51px] w-4/5 rounded-[18px] bg-[#144d37]">
            <svg viewBox="0 0 16 24" aria-hidden="true" className="absolute -right-[9px] bottom-0 h-6 w-4">
              <path d="M0 0H7Q6 18 16 24Q6 24 0 19Z" fill="#144d37" />
            </svg>
          </div>

          <JoyEmoji />
          <div className="mt-[10px] flex h-[39px] w-[101px] items-center justify-end rounded-[12px] bg-[#242626] pr-[15px] text-[19px] leading-[23px] text-[#8b8d8d]">
            <time>12:56</time>
          </div>

          <ul className="pt-2">
            {messages.map((message) => (
              <Bubble key={message.id} message={message} />
            ))}
          </ul>
        </div>

        {/* scroll thumb */}
        <div className="absolute bottom-[136px] right-[5px] h-40 w-1 rounded-full bg-[#2f3030]" />

        <button
          type="button"
          aria-label="Scroll to latest"
          className="absolute bottom-[57px] right-0 flex h-[61px] w-[82px] items-center justify-center rounded-l-[14px] bg-linear-to-br from-[#2a3531] to-[#262827] text-white"
        >
          <svg viewBox="0 0 36 36" className="size-9" fill="none" stroke="currentColor" strokeWidth="2.200" strokeLinecap="round" strokeLinejoin="round">
            <circle cx="18" cy="18" r="16.500" />
            <path d="M11.500 15.500L18 21.500L24.500 15.500" />
          </svg>
        </button>
      </main>
      <Composer />
    </div>
  );
}
